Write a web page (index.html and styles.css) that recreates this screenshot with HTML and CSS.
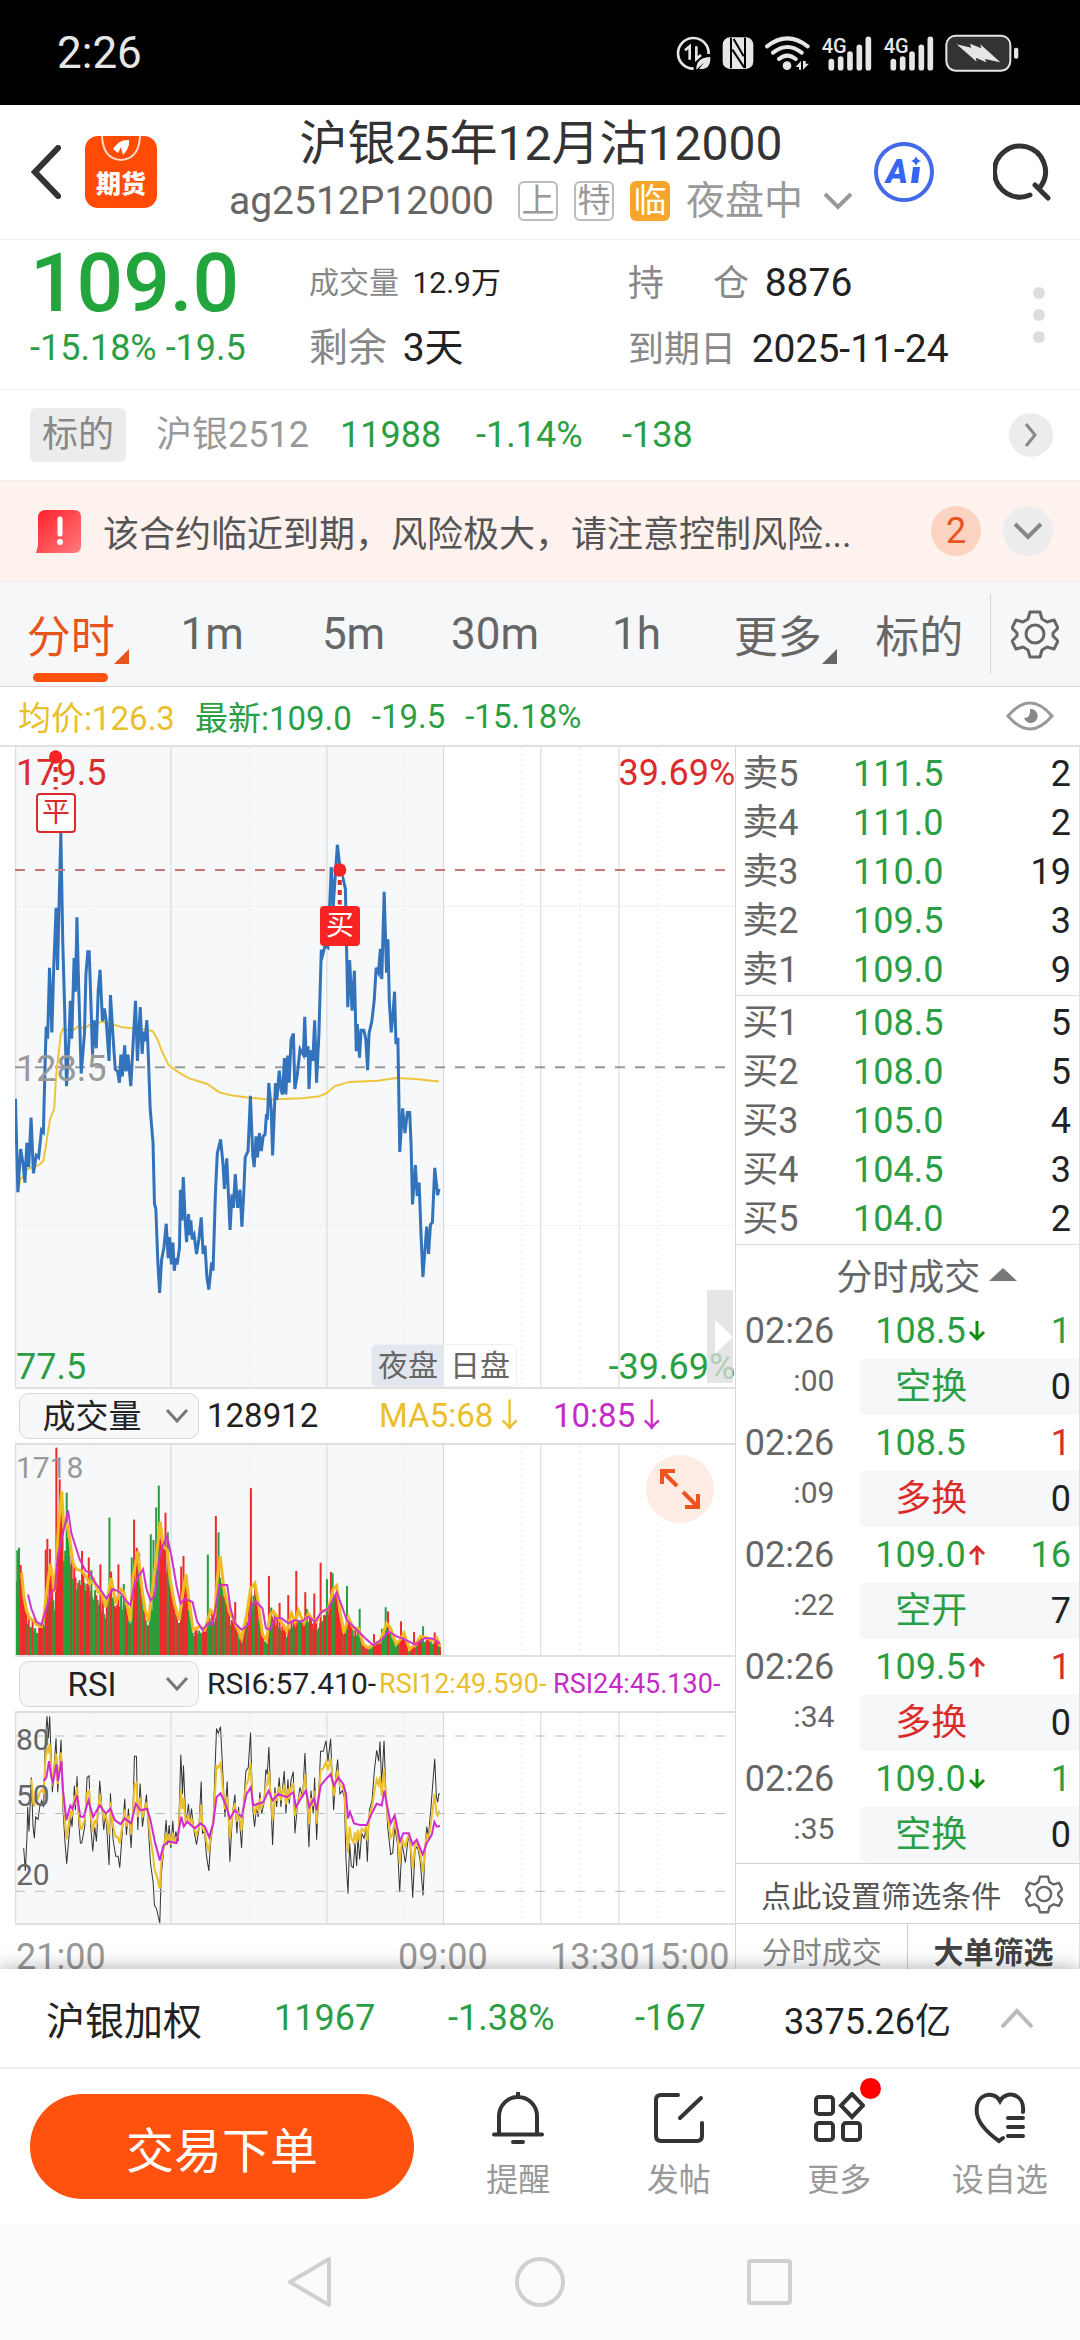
FILE: index.html
```html
<!DOCTYPE html>
<html lang="zh-CN">
<head>
  <meta charset="UTF-8" />
  <meta name="viewport" content="width=device-width, initial-scale=1.0"/>
  <title>沪银25年12月沽12000</title>
  <link rel="stylesheet" href="styles.css">
</head>
<body>

<div class="status-bar">
  <span class="clock">2:26</span>
  <svg class="status-icons" viewBox="48 40 1030 120" fill="#e6e6e6">
    <!-- data saver -->
    <path d="M100 147A46 46 0 1 1 145 103" fill="none" stroke="#e6e6e6" stroke-width="8"/>
    <path d="M74 92l14-12v40M108 80v38l14-12" fill="none" stroke="#e6e6e6" stroke-width="8"/>
    <path d="M108 150q-2-36 42-38q2 40-34 36l16-20z"/>
    <!-- nfc -->
    <rect x="187" y="53" width="92" height="95" rx="22"/>
    <path d="M212 54v92M254 54v92M220 58l30 52M216 90l36 54" fill="none" stroke="#000" stroke-width="6"/>
    <!-- wifi -->
    <path d="M320 80q61-48 122 0M338 99q43-34 86 0M356 118q25-20 50 0" fill="none" stroke="#e6e6e6" stroke-width="12" stroke-linecap="round"/>
    <circle cx="380" cy="138" r="13"/>
    <path d="M406 142l16-18v26h-6v-8zM428 124v26l18-18h-10v-8z"/>
    <!-- signal -->
    <g id="signal">
      <text x="484" y="99" font-size="60" font-weight="500">4G</text>
      <path d="M513 126v18M541 118v26M569 103v41M597 83v61M624 59v85" stroke="#e6e6e6" stroke-width="17" stroke-linecap="round"/>
    </g>
    <use href="#signal" x="186"/>
    <!-- battery -->
    <rect x="858" y="48" width="192" height="105" rx="28" fill="#333" stroke="#e6e6e6" stroke-width="6"/>
    <rect x="1061" y="84" width="13" height="33" rx="6"/>
    <path d="M889 74l44 10-4-12 34 14-3-12 60 54-46-10 4 10-32-14 3 12z"/>
  </svg>
</div>

<header class="header">
  <div class="header-left">
    <button class="icon-btn" aria-label="返回">
      <svg width="30" height="54" viewBox="0 0 30 54"><path d="M27 3L4 27l23 24" fill="none" stroke="#333" stroke-width="6" stroke-linecap="round"/></svg>
    </button>
    <svg class="app-logo" viewBox="0 0 72 72">
      <rect width="72" height="72" rx="13" fill="#ff4b05"/>
      <path d="M17 0q1 23 19 24q18-1 19-24" fill="none" stroke="#ffd9c8" stroke-width="2"/>
      <path d="M28 13q6-10 16-9q1 8-6 15l-2-8-3 6z" fill="#fff"/>
      <text x="36" y="57" font-size="25" font-weight="900" text-anchor="middle" fill="#fff">期货</text>
    </svg>
  </div>
  <div class="header-title">
    <h1>沪银25年12月沽12000</h1>
    <div class="subtitle">
      <span class="code">ag2512P12000</span>
      <span class="tag">上</span>
      <span class="tag">特</span>
      <span class="tag tag-solid">临</span>
      <button class="session">夜盘中
        <svg width="30" height="18" viewBox="0 0 30 18"><path d="M2 2l13 13L28 2" fill="none" stroke="#999" stroke-width="4"/></svg>
      </button>
    </div>
  </div>
  <div class="header-right">
    <button class="icon-btn" aria-label="Ai">
      <svg width="60" height="60" viewBox="0 0 60 60">
        <circle cx="30" cy="30" r="28" fill="none" stroke="#4169e8" stroke-width="4"/>
        <text x="12" y="41" font-size="33" font-weight="900" font-style="italic" fill="#3565f5">A</text>
        <path d="M39 25h7l-2 16h-7z" fill="#3565f5"/>
        <path d="M42 14q1 4 5 5q-4 1-5 5q-1-4-5-5q4-1 5-5z" fill="#3565f5"/>
      </svg>
    </button>
    <button class="icon-btn" aria-label="搜索">
      <svg width="58" height="58" viewBox="0 0 58 58"><path d="M37 52A25.500 25.500 0 1 1 48 43M42 42l13 13" fill="none" stroke="#333" stroke-width="5" stroke-linecap="round"/></svg>
    </button>
  </div>
</header>

<section class="quote">
  <div>
    <div class="row-top price">109.0</div>
    <div class="row-bottom change">-15.18% -19.5</div>
  </div>
  <div>
    <div class="row-top small"><span class="label">成交量</span> 12.9万</div>
    <div class="row-bottom"><span class="label">剩余</span> 3天</div>
  </div>
  <div>
    <div class="row-top"><span class="label label-sm spread"><i>持</i><i>仓</i></span> 8876</div>
    <div class="row-bottom"><span class="label label-sm">到期日</span> 2025-11-24</div>
  </div>
  <button class="dots" aria-label="更多"><i></i><i></i><i></i></button>
</section>

<section class="underlying">
  <span class="pill">标的</span>
  <span class="name">沪银2512</span>
  <span>11988</span>
  <span>-1.14%</span>
  <span>-138</span>
  <button class="round round-sm" aria-label="查看标的">
    <svg width="14" height="26" viewBox="0 0 14 26"><path d="M2 2l9 11-9 11" fill="none" stroke="#888" stroke-width="3"/></svg>
  </button>
</section>

<section class="notice">
  <svg width="45" height="43" viewBox="0 0 45 43">
    <defs><linearGradient id="alert" x1="0" y1="0" x2="1" y2="1"><stop offset="0" stop-color="#ff1f2b"/><stop offset="1" stop-color="#ff7b7b"/></linearGradient></defs>
    <path d="M10 0h28q7 0 7 7v29q0 7-7 7H0l2-8V8q0-8 8-8z" fill="url(#alert)"/>
    <path d="M24 9v15" stroke="#fff" stroke-width="5" stroke-linecap="round"/><circle cx="24" cy="32" r="3" fill="#fff"/>
  </svg>
  <p>该合约临近到期，风险极大，请注意控制风险...</p>
  <span class="count">2</span>
  <button class="round" aria-label="展开">
    <svg width="30" height="18" viewBox="0 0 30 18"><path d="M2 2l13 13L28 2" fill="none" stroke="#888" stroke-width="4"/></svg>
  </button>
</section>

<nav class="tabs">
  <button class="tab active has-more">分时</button>
  <button class="tab">1m</button>
  <button class="tab">5m</button>
  <button class="tab">30m</button>
  <button class="tab">1h</button>
  <button class="tab has-more">更多</button>
  <button class="tab">标的</button>
  <button class="settings" aria-label="设置">
    <svg width="48" height="50" viewBox="0 0 48 50" fill="none" stroke="#666" stroke-width="3" stroke-linejoin="round">
      <path id="gear" d="M19 3h10l2 7 5 3 7-2 4 8-5 5v3l5 5-4 8-7-2-5 3-2 7H19l-2-7-5-3-7 2-4-8 5-5v-3l-5-5 4-8 7 2 5-3z"/>
      <circle cx="24" cy="25" r="9"/>
    </svg>
  </button>
</nav>

<div class="summary">
  <span class="avg">均价:126.3</span>
  <span>最新:109.0</span>
  <span>-19.5</span>
  <span>-15.18%</span>
  <button class="icon-btn eye" aria-label="显示">
    <svg width="48" height="30" viewBox="0 0 48 30"><path d="M2 15Q24-11 46 15Q24 41 2 15z" fill="none" stroke="#999" stroke-width="3"/><path d="M24 8a7 7 0 1 1-6 9q7 0 6-9z" fill="#888"/></svg>
  </button>
</div>

<main class="main">
  <div class="charts">
    <div class="chart price-chart">
      <svg id="price" viewBox="33 17 1524 1525" preserveAspectRatio="none"></svg>
      <span class="axis top-left red">179.5</span>
      <span class="axis top-right red">39.69%</span>
      <span class="axis middle">128.5</span>
      <span class="axis bottom-left green">77.5</span>
      <span class="axis bottom-right green">-39.69%</span>
      <span class="mark mark-close">平</span>
      <span class="mark mark-buy">买</span>
      <div class="sessions"><button class="on">夜盘</button><button>日盘</button></div>
      <button class="drawer" aria-label="收起"><svg width="18" height="34" viewBox="0 0 18 34"><path d="M0 0l18 17L0 34z" fill="#fff"/></svg></button>
    </div>

    <div class="indicator">
      <label class="picker">
        <select aria-label="指标一"><option>成交量</option></select>
        <svg width="24" height="16" viewBox="0 0 24 16"><path d="M2 2l10 11L22 2" fill="none" stroke="#777" stroke-width="3"/></svg>
      </label>
      <span>128912</span>
      <span class="yellow">MA5:68↓</span>
      <span class="purple">10:85↓</span>
    </div>
    <div class="chart sub-chart">
      <svg id="volume" viewBox="46 40 2159 642" preserveAspectRatio="none"></svg>
      <span class="axis small vol-max">1718</span>
      <button class="expand" aria-label="全屏">
        <svg width="42" height="42" viewBox="0 0 42 42"><path d="M3 16V3h13M3 3l15 15M39 26v13H26M39 39L24 24" fill="none" stroke="#f0541e" stroke-width="4"/></svg>
      </button>
    </div>

    <div class="indicator">
      <label class="picker">
        <select aria-label="指标二"><option>RSI</option></select>
        <svg width="24" height="16" viewBox="0 0 24 16"><path d="M2 2l10 11L22 2" fill="none" stroke="#777" stroke-width="3"/></svg>
      </label>
      <span class="tight">RSI6:57.410-</span>
      <span class="yellow tighter">RSI12:49.590-</span>
      <span class="purple tighter">RSI24:45.130-</span>
    </div>
    <div class="chart sub-chart">
      <svg id="rsi" viewBox="46 843 2159 641" preserveAspectRatio="none"></svg>
      <span class="axis small dark rsi-80">80</span>
      <span class="axis small dark rsi-50">50</span>
      <span class="axis small dark rsi-20">20</span>
    </div>
    <div class="time-axis"><span>21:00</span><span class="mid">09:00</span><span>13:3015:00</span></div>
  </div>

  <aside class="side">
    <table class="book">
      <tbody>
        <tr><th>卖5</th><td>111.5</td><td>2</td></tr>
        <tr><th>卖4</th><td>111.0</td><td>2</td></tr>
        <tr><th>卖3</th><td>110.0</td><td>19</td></tr>
        <tr><th>卖2</th><td>109.5</td><td>3</td></tr>
        <tr><th>卖1</th><td>109.0</td><td>9</td></tr>
      </tbody>
    </table>
    <table class="book">
      <tbody>
        <tr><th>买1</th><td>108.5</td><td>5</td></tr>
        <tr><th>买2</th><td>108.0</td><td>5</td></tr>
        <tr><th>买3</th><td>105.0</td><td>4</td></tr>
        <tr><th>买4</th><td>104.5</td><td>3</td></tr>
        <tr><th>买5</th><td>104.0</td><td>2</td></tr>
      </tbody>
    </table>
    <button class="side-title">分时成交 <i></i></button>
    <ul class="ticks">
      <li>
        <div class="time">02:26<small>:00</small></div>
        <div class="deal green">108.5<svg class="arrow down"><use href="#arrow"/></svg><b>1</b></div>
        <div class="kind green">空换<b>0</b></div>
      </li>
      <li>
        <div class="time">02:26<small>:09</small></div>
        <div class="deal green">108.5<b class="red">1</b></div>
        <div class="kind red">多换<b>0</b></div>
      </li>
      <li>
        <div class="time">02:26<small>:22</small></div>
        <div class="deal green">109.0<svg class="arrow up"><use href="#arrow"/></svg><b>16</b></div>
        <div class="kind green">空开<b>7</b></div>
      </li>
      <li>
        <div class="time">02:26<small>:34</small></div>
        <div class="deal green">109.5<svg class="arrow up"><use href="#arrow"/></svg><b class="red">1</b></div>
        <div class="kind red">多换<b>0</b></div>
      </li>
      <li>
        <div class="time">02:26<small>:35</small></div>
        <div class="deal green">109.0<svg class="arrow down"><use href="#arrow"/></svg><b>1</b></div>
        <div class="kind green">空换<b>0</b></div>
      </li>
    </ul>
    <button class="filter">点此设置筛选条件
      <svg width="38" height="40" viewBox="0 0 48 50" fill="none" stroke="#666" stroke-width="3"><use href="#gear"/><circle cx="24" cy="25" r="9"/></svg>
    </button>
    <div class="side-tabs"><button>分时成交</button><button class="on">大单筛选</button></div>
  </aside>
</main>

<footer class="bottom">
  <div class="index-row">
    <span class="index-name">沪银加权</span>
    <span class="green">11967</span>
    <span class="green">-1.38%</span>
    <span class="green">-167</span>
    <span>3375.26亿</span>
    <svg width="34" height="22" viewBox="0 0 34 22"><path d="M2 20L17 4l15 16" fill="none" stroke="#bbb" stroke-width="4"/></svg>
  </div>
  <div class="actions">
    <button class="order">交易下单</button>
    <button class="action">
      <svg viewBox="0 0 52 52"><path d="M7 42V24a19 19 0 0 1 38 0v18M2 42.500h48M26 1v4M21 50h10"/></svg>提醒
    </button>
    <button class="action">
      <svg viewBox="0 0 52 52"><path d="M25 3H8q-5 0-5 5v36q0 5 5 5h36q5 0 5-5V31M48 6L27 26"/></svg>发帖
    </button>
    <button class="action new">
      <svg viewBox="0 0 52 52"><rect x="3" y="5" width="17" height="17" rx="3"/><rect x="3" y="31" width="17" height="17" rx="3"/><rect x="30" y="31" width="17" height="17" rx="3"/><path d="M39 2l11 11.500L39 25 28 13.500z"/></svg>更多
    </button>
    <button class="action">
      <svg viewBox="0 0 52 52"><path d="M49 20C51 1 32-2 26 9C20-2 0 1 3 22C5 34 18 44 25 49l4-3M34 26h15M34 35h15M34 44h15"/></svg>设自选
    </button>
  </div>
</footer>

<nav class="system-nav">
  <button aria-label="后退"><svg width="50" height="52" viewBox="0 0 50 52"><path d="M44 3v46L5 26z"/></svg></button>
  <button aria-label="主页"><svg width="50" height="52" viewBox="0 0 50 52"><circle cx="25" cy="26" r="23"/></svg></button>
  <button aria-label="任务"><svg width="50" height="52" viewBox="0 0 50 52"><rect x="4" y="5" width="41" height="42" rx="2"/></svg></button>
</nav>

<svg class="sprite"><symbol id="arrow" viewBox="0 0 18 22"><path d="M9 1v18M2 12l7 7 7-7" fill="none" stroke="currentColor" stroke-width="3"/></symbol></svg>

<script src="charts.js"></script>
</body>
</html>
```
FILE: styles.css
```css
* {
  box-sizing: border-box;
}
body {
  margin: 0;
  height: 100vh;
  display: flex;
  flex-direction: column;
  font-family: Roboto, "Noto Sans CJK SC", sans-serif;
  font-size: 36px;
  color: #222;
  background: #fff;
}
button, select {
  font: inherit;
  color: inherit;
  border: none;
  background: none;
  padding: 0;
  cursor: pointer;
}
svg {
  display: block;
  flex: none;
}
i, b {
  font-style: normal;
  font-weight: normal;
}
.sprite {
  position: absolute;
  width: 0;
  height: 0;
}
.green { color: #2b9e44; }
.red { color: #dc2b2b; }
.yellow { color: #ebbf2b; }
.purple { color: #c52bc9; }

/* status bar */
.status-bar {
  flex: none;
  height: 105px;
  padding: 0 60px 0 57px;
  display: flex;
  align-items: center;
  justify-content: space-between;
  background: #000;
  color: #e6e6e6;
}
.clock {
  font-size: 44px;
  line-height: 48px;
}
.status-icons {
  width: 344px;
  height: 40px;
}

/* header */
.header {
  flex: none;
  height: 135px;
  display: flex;
  align-items: center;
  border-bottom: 1px solid #eee;
}
.header-left, .header-right {
  flex: 1;
  display: flex;
  align-items: center;
}
.header-left {
  padding-left: 31px;
  gap: 24px;
}
.header-right {
  justify-content: flex-end;
  padding-right: 29px;
  gap: 59px;
}
.app-logo {
  width: 72px;
  height: 72px;
}
.header-title {
  text-align: center;
}
.header h1 {
  margin: 0;
  font-size: 48px;
  font-weight: normal;
  line-height: 58px;
  color: #333;
}
.subtitle {
  display: flex;
  align-items: center;
  gap: 16px;
  font-size: 39px;
  line-height: 56px;
  color: #999;
}
.code {
  color: #666;
  margin-right: 8px;
}
.tag {
  width: 40px;
  height: 40px;
  border: 2px solid #bbb;
  border-radius: 6px;
  font-size: 33px;
  line-height: 36px;
}
.tag-solid {
  border-color: #f5a62b;
  background: #f5a62b;
  color: #fff;
}
.session {
  display: flex;
  align-items: center;
  gap: 20px;
}

/* quote */
.quote {
  flex: none;
  height: 150px;
  padding: 8px 35px 0 30px;
  display: grid;
  grid-template-columns: 279px 319px 1fr auto;
  border-bottom: 1px solid #f2f2f2;
  font-size: 39px;
  white-space: nowrap;
}
.row-top { line-height: 70px; }
.row-bottom { line-height: 60px; }
.price {
  font-size: 82px;
  font-weight: 500;
  color: #22a53c;
}
.change {
  font-size: 36px;
  color: #2b9e44;
}
.small { font-size: 30px; }
.label {
  color: #888;
  margin-right: 6px;
}
.label-sm {
  font-size: 36px;
}
.spread {
  display: inline-flex;
  width: 121px;
  justify-content: space-between;
}
.dots {
  height: 134px;
  display: flex;
  flex-direction: column;
  justify-content: center;
  gap: 10px;
}
.dots i {
  width: 12px;
  height: 12px;
  border-radius: 50%;
  background: #ddd;
}

/* underlying */
.underlying {
  flex: none;
  height: 91px;
  padding: 0 27px 0 30px;
  display: grid;
  grid-template-columns: 96px 154px 106px 116px 1fr auto;
  gap: 30px;
  align-items: center;
  line-height: 54px;
  color: #2b9e44;
  border-bottom: 1px solid #eee;
}
.pill {
  background: #ececec;
  border-radius: 6px;
  text-align: center;
  color: #888;
}
.underlying .name { color: #999; }
.round {
  width: 50px;
  height: 50px;
  border-radius: 50%;
  background: #ececec;
  display: flex;
  align-items: center;
  justify-content: center;
}
.round-sm {
  width: 44px;
  height: 44px;
}

/* notice */
.notice {
  flex: none;
  height: 101px;
  padding: 0 27px 0 36px;
  display: flex;
  align-items: center;
  gap: 22px;
  background: #fdf2ed;
  border-bottom: 1px solid #eee;
}
.notice p {
  flex: 1;
  margin: 0;
  color: #555;
  white-space: nowrap;
}
.count {
  width: 50px;
  height: 50px;
  border-radius: 50%;
  background: #fbd3c0;
  color: #e8541e;
  line-height: 50px;
  text-align: center;
}

/* period tabs */
.tabs {
  flex: none;
  height: 105px;
  display: flex;
  align-items: center;
  background: #f6f7f9;
  border-bottom: 1px solid #d4d6d9;
}
.tab {
  flex: 1;
  position: relative;
  height: 100%;
  font-size: 44px;
  color: #666;
}
.active {
  color: #e8541e;
}
.active::before {
  content: "";
  position: absolute;
  left: 33px;
  bottom: 4px;
  width: 75px;
  height: 9px;
  border-radius: 5px;
  background: #ff520e;
}
.has-more::after {
  content: "";
  position: absolute;
  right: 12px;
  bottom: 22px;
  border-left: 15px solid transparent;
  border-bottom: 15px solid currentColor;
}
.settings {
  width: 90px;
  height: 80px;
  border-left: 1px solid #d4d6d9;
  display: flex;
  align-items: center;
  justify-content: center;
}

.summary {
  flex: none;
  height: 60px;
  padding: 0 26px 0 18px;
  display: flex;
  align-items: center;
  gap: 20px;
  font-size: 33px;
  color: #2b9e44;
  border-bottom: 2px solid #e0e0e0;
}
.avg { color: #e9bf2c; }
.eye { margin-left: auto; }

/* charts */
.main {
  flex: 1;
  min-height: 0;
  overflow: hidden;
  display: grid;
  grid-template-columns: 15fr 7fr;
}
.charts {
  border-right: 1px solid #d8d8d8;
  padding-left: 15px;
}
.chart {
  position: relative;
}
.chart > svg {
  width: 100%;
  height: 100%;
}
.chart polyline, .chart line {
  fill: none;
  vector-effect: non-scaling-stroke;
}
.price-chart {
  height: 642px;
  border-bottom: 2px solid #e0e0e0;
}
.sub-chart {
  height: 214px;
  border-top: 2px solid #dedede;
  border-bottom: 2px solid #e0e0e0;
}
.axis {
  position: absolute;
  line-height: 36px;
  color: #999;
}
.axis.red { color: #dc2b2b; }
.axis.green { color: #2b9e44; }
.axis.dark { color: #666; }
.top-left { left: 1px; top: 8px; }
.top-right { right: 0; top: 8px; }
.middle { left: 1px; top: 304px; }
.bottom-left { left: 1px; bottom: 2px; }
.bottom-right { right: 0; bottom: 2px; }
.vol-max { left: 1px; top: 5px; }
.rsi-80 { left: 1px; top: 9px; }
.rsi-50 { left: 1px; top: 65px; }
.rsi-20 { left: 1px; top: 144px; }
.mark {
  position: absolute;
  width: 40px;
  height: 40px;
  border: 2px solid #dc2b2b;
  border-radius: 4px;
  font-size: 28px;
  line-height: 36px;
  text-align: center;
}
.mark-close {
  left: 21px;
  top: 46px;
  background: #fff;
  color: #dc2b2b;
}
.mark-buy {
  left: 305px;
  top: 159px;
  background: #f82424;
  border-color: #f82424;
  color: #fff;
}
.sessions {
  position: absolute;
  left: 356px;
  bottom: 0;
  display: flex;
  border: 1px solid #eee;
  border-radius: 6px;
  overflow: hidden;
}
.sessions button {
  width: 72px;
  height: 41px;
  font-size: 30px;
  line-height: 40px;
  background: #fff;
  color: #666;
}
.sessions .on { background: #e2e6ef; }
.drawer {
  position: absolute;
  right: 2px;
  bottom: 4px;
  width: 26px;
  height: 93px;
  background: rgba(220, 220, 220, 0.75);
  display: flex;
  align-items: center;
  justify-content: flex-end;
}
.indicator {
  height: 54px;
  padding-left: 4px;
  display: grid;
  grid-template-columns: 180px 164px 166px 1fr;
  column-gap: 8px;
  align-items: center;
  font-size: 33px;
  line-height: 46px;
  white-space: nowrap;
}
.indicator .tight { font-size: 30px; }
.indicator .tighter { font-size: 27px; }
.picker {
  position: relative;
  height: 46px;
}
.picker select {
  appearance: none;
  width: 100%;
  height: 100%;
  padding-right: 34px;
  border: 1px solid #d4d8de;
  border-radius: 10px;
  background: #f6f7f9;
  text-align: center;
  text-align-last: center;
}
.picker svg {
  position: absolute;
  right: 10px;
  top: 15px;
  pointer-events: none;
}
.expand {
  position: absolute;
  right: 21px;
  top: 10px;
  width: 68px;
  height: 68px;
  border-radius: 50%;
  background: #ffece5;
  display: flex;
  align-items: center;
  justify-content: center;
}
.time-axis {
  display: flex;
  justify-content: space-between;
  padding: 12px 6px 0 1px;
  line-height: 40px;
  color: #999;
}
.time-axis .mid { margin-left: 230px; }

/* order book and trades */
.side {
  display: flex;
  flex-direction: column;
  border-right: 1px solid #e0e0e0;
}
.book {
  width: 100%;
  padding: 3px 8px 0 6px;
  border-spacing: 0;
  border-bottom: 1px solid #ddd;
}
.book th, .book td {
  padding: 0;
  height: 49px;
  line-height: 49px;
  font-weight: normal;
  text-align: right;
  white-space: nowrap;
}
.book th {
  width: 60px;
  text-align: left;
  color: #666;
}
.book td:nth-child(2) {
  width: 141px;
  color: #2b9e44;
}
.side-title {
  height: 58px;
  padding-left: 38px;
  display: flex;
  align-items: center;
  justify-content: center;
  gap: 9px;
  color: #666;
}
.side-title i {
  border: 14px solid transparent;
  border-top: none;
  border-bottom: 13px solid #777;
}
.ticks {
  margin: 0;
  padding: 0 0 0 6px;
  list-style: none;
}
.ticks li {
  display: grid;
  grid-template-columns: 92px 1fr;
  column-gap: 26px;
  line-height: 56px;
}
.time {
  grid-row: span 2;
  text-align: right;
  color: #666;
}
.time small {
  display: block;
  font-size: 30px;
  line-height: 44px;
}
.deal, .kind {
  height: 56px;
  display: flex;
  align-items: center;
  padding-right: 8px;
}
.deal { padding-left: 15px; }
.kind {
  padding-left: 35px;
  background: #f6f7f9;
  border-radius: 6px 0 0 6px;
}
.ticks b { margin-left: auto; }
.kind b { color: #222; }
.arrow {
  width: 18px;
  height: 22px;
  margin-left: 2px;
}
.arrow.down { color: #0f8f0f; }
.arrow.up { color: #dc2b2b; transform: rotate(180deg); }
.filter {
  flex: none;
  height: 61px;
  padding: 0 16px 0 25px;
  display: flex;
  align-items: center;
  justify-content: space-between;
  border-top: 1px solid #d0d0d0;
  border-bottom: 1px solid #d0d0d0;
  font-size: 30px;
  color: #555;
}
.side-tabs {
  flex: 1;
  display: flex;
  font-size: 30px;
  line-height: 58px;
}
.side-tabs button {
  flex: 1;
  height: 58px;
  color: #888;
}
.side-tabs .on {
  border-left: 1px solid #ccc;
  font-weight: bold;
  color: #444;
}

/* bottom */
.bottom {
  flex: none;
  position: relative;
  background: #fff;
  box-shadow: 0 0 18px rgba(0, 0, 0, 0.35);
}
.index-row {
  height: 100px;
  padding: 0 46px;
  display: grid;
  grid-template-columns: 156px 102px 115px 77px 1fr auto;
  column-gap: 72px;
  align-items: center;
  border-bottom: 2px solid #eee;
  white-space: nowrap;
}
.index-name { font-size: 39px; }
.index-row :nth-child(5) { margin-right: -72px; }
.actions {
  height: 155px;
  padding-left: 30px;
  display: flex;
  align-items: center;
}
.order {
  flex: 0 0 384px;
  height: 105px;
  margin-right: 24px;
  border-radius: 53px;
  background: #ff520e;
  color: #fff;
  font-size: 48px;
}
.action {
  flex: 1;
  position: relative;
  display: flex;
  flex-direction: column;
  align-items: center;
  gap: 14px;
  font-size: 32px;
  line-height: 44px;
  color: #999;
}
.action svg {
  width: 52px;
  height: 52px;
  fill: none;
  stroke: #333;
  stroke-width: 4px;
  stroke-linecap: round;
}
.new::after {
  content: "";
  position: absolute;
  left: 101px;
  top: -14px;
  width: 21px;
  height: 21px;
  border-radius: 50%;
  background: #f00;
}

.system-nav {
  position: relative;
  flex: none;
  height: 116px;
  display: flex;
  align-items: center;
  justify-content: center;
  gap: 180px;
  background: #fbfbfb;
}
.system-nav svg {
  fill: none;
  stroke: #d0d0d0;
  stroke-width: 4px;
  stroke-linejoin: round;
}
```
FILE: charts.js
```js
const NS = 'http://www.w3.org/2000/svg';

const priceLine = '34,855 39,1078 45,975 50,1010 54,1055 58,960 62,1018 67,900 72,1033 78,990 83,995 89,930 93,935 96,800 99,683 102,712 106,543 111,697 115,540 120,400 123,548 126,400 130,222 134,480 138,640 142,825 147,720 150,622 153,712 158,520 161,600 164,423 167,560 173,795 180,700 183,560 187,505 190,505 194,640 197,750 200,668 205,735 209,600 213,548 218,670 222,640 226,670 232,765 235,608 240,700 245,785 250,790 254,817 257,750 260,802 265,728 268,790 272,750 278,825 284,700 288,622 292,765 298,637 302,748 305,695 308,718 312,668 315,750 319,880 325,960 328,1105 331,1118 335,1240 339,1318 343,1240 348,1210 353,1153 357,1235 360,1185 364,1250 367,1198 370,1265 373,1235 376,1250 381,1210 383,1072 386,1145 389,1042 393,1145 396,1197 400,1130 403,1180 405,1145 408,1190 412,1180 417,1225 422,1190 427,1138 431,1225 435,1205 439,1280 443,1310 449,1245 452,1265 457,1080 461,985 468,952 473,1010 476,1070 481,997 488,1168 492,1083 495,1115 499,1035 504,1115 509,1072 513,1160 517,1080 520,995 526,980 531,848 536,990 539,1018 543,945 546,995 550,937 554,980 558,945 562,940 565,892 567,905 570,818 575,880 578,990 584,818 587,858 592,788 596,835 599,845 603,758 606,845 610,752 613,817 617,715 622,700 625,832 630,800 636,737 643,750 646,660 649,755 653,730 655,832 659,740 663,765 667,668 671,817 676,700 681,500 684,512 689,490 695,495 702,303 706,400 715,250 721,310 727,330 732,355 737,637 741,525 746,645 751,550 755,742 757,677 762,757 765,692 771,692 775,712 779,787 782,700 788,670 793,620 797,543 802,555 806,498 809,570 814,362 819,555 822,475 825,625 829,697 833,650 836,600 839,725 843,710 847,982 853,878 858,937 863,888 868,888 871,965 874,1107 880,1013 884,1087 888,1055 892,1180 896,1280 904,1160 908,1225 912,1155 916,1150 921,1020 927,1085 930,1070';
const avgLine = '39,1078 45,1045 52,1040 57,1025 65,1020 72,1018 85,1012 93,1003 98,970 107,905 116,878 120,800 130,700 135,688 145,692 152,695 168,682 180,688 190,680 217,672 238,677 260,685 285,688 312,690 325,695 335,715 345,745 358,775 380,793 400,806 440,820 465,840 490,847 525,852 570,857 600,856 640,854 675,850 692,842 710,825 740,815 800,812 840,806 880,808 930,814';

const ma5 = '66,430 72,500 80,545 90,570 100,575 112,590 125,595 132,570 142,480 152,403 158,440 164,490 170,400 176,290 186,182 192,290 202,283 210,330 220,400 230,420 245,425 258,440 270,465 282,450 295,490 305,495 318,535 334,447 348,525 362,480 372,490 385,545 392,580 400,440 414,365 425,470 435,540 446,580 455,500 468,400 481,274 490,350 502,360 512,460 525,530 538,575 548,500 558,435 568,520 580,605 600,595 615,605 632,545 645,560 652,450 661,380 672,480 690,555 700,570 725,632 740,560 752,480 765,463 775,520 788,620 800,637 810,560 820,548 835,570 850,590 860,610 875,555 886,582 895,545 912,585 925,555 935,570 950,580 965,550 985,540 1000,480 1010,470 1020,550 1032,615 1045,567 1060,600 1075,600 1090,650 1105,660 1120,650 1140,640 1160,585 1172,600 1188,650 1200,635 1212,615 1228,665 1245,650 1262,625 1280,630 1300,640 1310,630 1320,655';
const ma10 = '85,497 95,540 110,580 125,590 140,540 155,490 166,480 174,380 190,310 205,240 215,310 240,390 258,425 270,430 285,460 300,478 320,510 340,480 360,490 378,515 392,530 405,460 430,420 440,480 452,515 465,500 480,375 490,345 502,320 515,380 530,470 542,525 555,510 578,520 592,580 608,605 625,585 638,590 650,520 658,468 682,468 692,540 705,585 725,605 745,590 755,530 768,518 788,540 798,600 810,605 825,570 845,570 865,585 885,575 905,580 925,565 945,580 965,550 985,540 1010,490 1025,530 1040,575 1060,595 1080,615 1100,635 1120,652 1145,635 1165,610 1190,625 1215,635 1245,650 1275,630 1300,632 1320,648';
const spikes = 'g52,362 g57,354 r62,407 r66,495 r137,360 r142,327 r150,358 r169,48 r179,145 r184,276 g200,186 g206,320 r246,364 r266,384 g274,423 r301,405 g328,262 r333,427 r355,405 g371,465 g395,384 r402,268 r410,354 g417,370 g452,313 g460,330 g468,231 g476,164 r488,345 r496,247 g503,307 r543,412 r550,379 g623,375 r647,257 g655,307 r663,500 r705,520 r752,172 g760,500 r806,440 g813,537 r838,523 r864,499 r888,425 r915,490 g920,541 r942,494 r961,400 g980,450 r992,428 g997,432 r1010,500 g1040,471 g1078,541 r1121,618 g1145,602 g1156,536 r1163,549 r1202,579 r1241,612 g1268,594 r1303,613 r1319,672';

const rsi6 = '72,1255 77,1325 82,1220 84,1130 88,1205 95,1040 100,1190 104,1225 108,1160 115,1168 120,1130 126,1110 132,1130 137,920 142,853 146,920 150,853 158,1085 169,920 174,1085 184,925 190,1140 196,1240 201,1303 207,1230 213,1160 217,1190 224,1065 227,1140 232,1036 237,1180 242,1240 246,1240 255,1190 262,1040 268,1035 273,1190 279,1265 285,1190 290,1235 300,1050 307,1140 312,1200 318,1150 328,1307 332,1088 340,1230 348,1280 355,1280 360,1315 368,1200 375,1105 380,1215 386,1135 394,1255 400,1120 404,975 410,975 414,1200 421,1058 428,1190 440,1092 446,1200 452,1300 460,1360 464,1430 470,1440 480,1484 484,1340 490,1280 499,1170 503,1245 508,1185 513,1255 519,1172 523,1240 528,1205 535,1235 539,1110 543,970 548,1090 551,1003 558,1180 566,1120 570,1180 575,1135 582,1200 590,1245 597,1200 604,1052 608,1210 614,1205 620,1280 627,1325 632,1240 640,1180 646,1000 650,890 655,905 662,885 668,1010 675,1160 682,1052 690,1297 698,1150 705,1092 711,1210 716,1130 725,1255 732,1110 738,1020 745,1010 752,903 758,1130 764,1190 770,1130 775,1160 780,1085 785,1150 792,1120 798,1015 802,1030 807,947 813,1110 818,1246 825,1070 830,1130 838,1040 843,1130 848,1070 853,1020 858,1150 864,1045 868,1120 873,1050 880,1022 885,1210 893,1120 900,1070 908,1100 915,965 921,1110 927,1253 933,1080 940,1150 944,1040 950,1230 957,1070 962,960 970,960 978,928 984,990 992,922 1001,1140 1007,1040 1013,985 1020,1090 1027,1080 1033,1100 1038,1290 1044,1395 1049,1240 1054,1310 1060,1315 1065,1240 1070,1310 1074,1220 1079,1290 1085,1210 1092,1225 1098,1200 1102,1297 1108,1140 1116,1110 1123,1020 1130,957 1136,990 1140,930 1145,1060 1152,928 1158,1100 1163,1190 1172,1275 1178,1270 1184,1190 1192,1240 1199,1390 1206,1240 1216,1300 1225,1220 1230,1240 1238,1407 1245,1260 1252,1250 1260,1290 1269,1400 1276,1240 1280,1190 1285,1220 1292,1140 1298,1060 1304,983 1309,1100 1313,1115 1316,1090 1320,1090';
const rsi24 = '132,1050 140,1040 148,990 155,1040 160,1055 170,1000 175,1050 185,990 190,1080 200,1170 212,1125 218,1135 232,1095 242,1160 252,1160 266,1110 280,1160 300,1125 318,1150 332,1135 345,1170 362,1182 375,1165 394,1180 408,1120 422,1140 442,1135 452,1170 465,1235 480,1293 490,1250 505,1235 530,1240 544,1160 552,1190 562,1175 585,1195 602,1180 615,1190 628,1222 640,1180 650,1100 662,1088 672,1110 680,1130 690,1165 705,1140 725,1160 740,1090 753,1070 760,1125 775,1120 790,1115 806,1080 818,1110 835,1090 860,1100 880,1085 888,1130 905,1100 918,1080 928,1130 942,1105 950,1140 962,1065 978,1045 992,1030 1002,1065 1015,1040 1030,1060 1038,1090 1044,1165 1050,1145 1062,1180 1080,1185 1100,1185 1115,1150 1130,1120 1145,1125 1153,1080 1162,1130 1172,1180 1184,1155 1200,1235 1210,1210 1226,1210 1238,1245 1250,1230 1268,1275 1280,1240 1295,1215 1303,1175 1310,1190 1320,1188';

function add(svg, tag, attrs) {
  const el = document.createElementNS(NS, tag);
  for (const key in attrs) el.setAttribute(key, attrs[key]);
  svg.appendChild(el);
  return el;
}

function parse(str) {
  return str.split(' ').map(p => p.split(',').map(Number));
}

function valueAt(points, x) {
  if (x <= points[0][0]) return points[0][1];
  for (let i = 1; i < points.length; i++) {
    const [x0, y0] = points[i - 1];
    const [x1, y1] = points[i];
    if (x <= x1) return y0 + (y1 - y0) * (x - x0) / (x1 - x0);
  }
  return points[points.length - 1][1];
}

function polyline(svg, points, color, width) {
  add(svg, 'polyline', { points, stroke: color, 'stroke-width': width });
}

function hline(svg, y, color, dash, width) {
  const { x, width: w } = svg.viewBox.baseVal;
  add(svg, 'line', { x1: x, x2: x + w, y1: y, y2: y, stroke: color, 'stroke-width': width, 'stroke-dasharray': dash });
}

// night session background and the vertical time grid
function grid(svg) {
  const { x, y, width: w, height: h } = svg.viewBox.baseVal;
  add(svg, 'rect', { x, y, width: w * 0.595, height: h, fill: '#f6f8fa' });
  const vline = (f, color, dash) => add(svg, 'line', { x1: x + w * f, x2: x + w * f, y1: y, y2: y + h, stroke: color, 'stroke-dasharray': dash });
  [0.001, 0.2165, 0.433, 0.595, 0.73, 0.8385].forEach(f => vline(f, '#d4d6d8', 'none'));
  [0.109, 0.3255, 0.541, 0.7035, 0.784, 0.8925].forEach(f => vline(f, '#e4e4e4', '2 4'));
}

const price = document.getElementById('price');
grid(price);
hline(price, 397, '#e4e4e4', '2 2', 1);
hline(price, 1157, '#e4e4e4', '2 2', 1);
hline(price, 780, '#999', '10 10', 2);
polyline(price, avgLine, '#ecc63c', 2);
polyline(price, priceLine, '#3273bb', 3);
hline(price, 310, '#cb7676', '10 10', 2);
[[119, 41, 118], [720, 310, 392]].forEach(([x, y, end]) => {
  add(price, 'line', { x1: x, x2: x, y1: y, y2: end, stroke: '#fff', 'stroke-width': 4 });
  add(price, 'line', { x1: x, x2: x, y1: y, y2: end, stroke: '#dc2b2b', 'stroke-width': 4, 'stroke-dasharray': '5 5' });
  add(price, 'ellipse', { cx: x, cy: y, rx: 14, ry: 16, fill: '#f82424' });
});

const volume = document.getElementById('volume');
grid(volume);
const bar = (x, top, green) => add(volume, 'rect', { x: x - 2, y: top, width: 6, height: 682 - top, fill: green ? '#2b9e3c' : '#ee2a2a' });
const ma5Points = parse(ma5);
let seed = 7;
for (let i = 0; i < 326; i++) {
  seed = (seed * 1103515245 + 12345) % 2147483648;
  const r = seed / 2147483648;
  const x = 51 + i * 3.9;
  const h = 682 - valueAt(ma5Points, x);
  let green = i % 2 === 0 ? r < 0.62 : r < 0.35;
  if (x > 446 && x < 480) green = true;
  if (x >= 480 && x < 500) green = false;
  bar(x, 682 - h * (0.7 + r * 0.32), green);
}
spikes.split(' ').forEach(s => {
  const [x, y] = s.slice(1).split(',').map(Number);
  bar(x, y, s[0] === 'g');
});
polyline(volume, ma5, '#f0bb22', 3);
polyline(volume, ma10, '#cf35c8', 2);

const rsi = document.getElementById('rsi');
grid(rsi);
const rsi24Points = parse(rsi24);
const rsi12 = parse(rsi6).filter(p => p[0] > 90)
  .map(([x, y]) => [x, y * 0.45 + valueAt(rsi24Points, x) * 0.55].join(',')).join(' ');
polyline(rsi, rsi6, '#333', 1);
polyline(rsi, rsi12, '#ebc02b', 2);
polyline(rsi, rsi24, '#d02bd0', 2);
[913, 1150, 1387].forEach(y => hline(rsi, y, '#bbb', '10 10', 1));
```
